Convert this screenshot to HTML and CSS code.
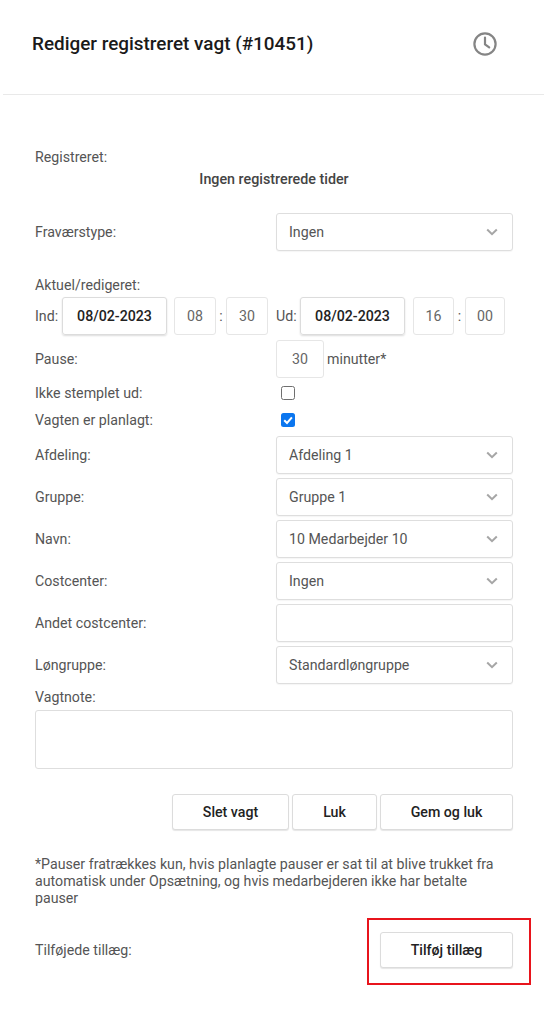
FILE: index.html
```html
<!DOCTYPE html>
<html lang="da">
<head>
<meta charset="utf-8">
<title>Rediger registreret vagt</title>
<link rel="stylesheet" href="styles.css">
</head>
<body>
<div class="modal">
  <header class="head">
    <h1>Rediger registreret vagt (#10451)</h1>
    <svg class="clock" width="26" height="26" viewBox="0 0 26 26" fill="none" stroke="#858585" stroke-width="2.2" stroke-linecap="round" stroke-linejoin="round"><circle cx="13" cy="13" r="10.6"/><path d="M13 6.6V13.4L17.2 16.4"/></svg>
  </header>
  <main class="body">
    <div class="label-line reg">Registreret:</div>
    <div class="none">Ingen registrerede tider</div>

    <div class="row fravaer"><label>Fraværstype:</label><div class="select">Ingen<svg class="chev" width="12" height="8" viewBox="0 0 12 8" fill="none"><path d="M1.2 1.5L6 6.2L10.8 1.5" stroke="#a6a6a6" stroke-width="2"/></svg></div></div>

    <div class="label-line aktuel">Aktuel/redigeret:</div>
    <div class="times">
      <span class="tl">Ind:</span>
      <div class="box date">08/02-2023</div>
      <div class="box t">08</div><span class="colon">:</span><div class="box t">30</div>
      <span class="tl ud">Ud:</span>
      <div class="box date date2">08/02-2023</div>
      <div class="box t t2">16</div><span class="colon c-wide">:</span><div class="box t t3">00</div>
    </div>

    <div class="row pause"><label>Pause:</label><div class="field-inline"><div class="box p">30</div><span class="min">minutter*</span></div></div>

    <div class="row check c1"><label>Ikke stemplet ud:</label><span class="cb"></span></div>
    <div class="row check c2"><label>Vagten er planlagt:</label><span class="cb on"><svg width="14" height="14" viewBox="0 0 14 14" fill="none"><path d="M3.2 7.2L6 10L10.9 4.3" stroke="#fff" stroke-width="2"/></svg></span></div>

    <div class="row sel first"><label>Afdeling:</label><div class="select">Afdeling 1<svg class="chev" width="12" height="8" viewBox="0 0 12 8" fill="none"><path d="M1.2 1.5L6 6.2L10.8 1.5" stroke="#a6a6a6" stroke-width="2"/></svg></div></div>
    <div class="row sel"><label>Gruppe:</label><div class="select">Gruppe 1<svg class="chev" width="12" height="8" viewBox="0 0 12 8" fill="none"><path d="M1.2 1.5L6 6.2L10.8 1.5" stroke="#a6a6a6" stroke-width="2"/></svg></div></div>
    <div class="row sel"><label>Navn:</label><div class="select">10 Medarbejder 10<svg class="chev" width="12" height="8" viewBox="0 0 12 8" fill="none"><path d="M1.2 1.5L6 6.2L10.8 1.5" stroke="#a6a6a6" stroke-width="2"/></svg></div></div>
    <div class="row sel"><label>Costcenter:</label><div class="select">Ingen<svg class="chev" width="12" height="8" viewBox="0 0 12 8" fill="none"><path d="M1.2 1.5L6 6.2L10.8 1.5" stroke="#a6a6a6" stroke-width="2"/></svg></div></div>
    <div class="row sel"><label>Andet costcenter:</label><div class="select"></div></div>
    <div class="row sel"><label>Løngruppe:</label><div class="select">Standardløngruppe<svg class="chev" width="12" height="8" viewBox="0 0 12 8" fill="none"><path d="M1.2 1.5L6 6.2L10.8 1.5" stroke="#a6a6a6" stroke-width="2"/></svg></div></div>

    <div class="label-line vagtnote">Vagtnote:</div>
    <div class="textarea"></div>

    <div class="actions">
      <button class="btn slet">Slet vagt</button>
      <button class="btn luk">Luk</button>
      <button class="btn gem">Gem og luk</button>
    </div>

    <p class="note">*Pauser fratrækkes kun, hvis planlagte pauser er sat til at blive trukket fra automatisk under Opsætning, og hvis medarbejderen ikke har betalte pauser</p>

    <div class="row extra"><label>Tilføjede tillæg:</label><button class="btn gem">Tilføj tillæg</button></div>
  </main>
  <div class="annot"></div>
</div>
</body>
</html>
```
FILE: styles.css
```css
* { box-sizing: border-box; }
html, body { margin: 0; padding: 0; background: #fff; }
body { font-family: Roboto, "Liberation Sans", sans-serif; font-size: 14.2px; color: #555; }
.modal { position: relative; width: 544px; height: 1012px; overflow: hidden; }
.head { height: 95px; margin-left: 3px; padding: 0 46px 6px 29px; border-bottom: 1px solid #e9e9e9; display: flex; align-items: center; justify-content: space-between; }
.head h1 { margin: 0; font-size: 18.9px; font-weight: 500; color: #1a1a1a; line-height: 24px; }
.clock { display: block; }
.body { padding: 0 31px 0 35px; }
.label-line { line-height: 17px; height: 17px; }
.reg { margin-top: 54px; }
.none { margin-top: 5px; text-align: center; font-weight: 500; color: #444; line-height: 17px; height: 17px; font-size: 14.3px; }
.row { display: flex; align-items: center; }
.row label { width: 241px; flex: none; }
.select { position: relative; flex: 1; height: 38px; padding: 0 12px; line-height: 36px; border: 1px solid #dedede; border-radius: 3px; background: #fff; box-shadow: 0 1px 1px rgba(0,0,0,.04); color: #555; }
.chev { position: absolute; right: 14px; top: 14px; }
.fravaer { margin-top: 25px; }
.aktuel { margin-top: 26px; }
.times { display: flex; align-items: center; height: 38px; margin-top: 3px; }
.tl { flex: none; width: 27px; }
.tl.ud { width: 24px; margin-left: 8px; }
.box { height: 38px; line-height: 36px; text-align: center; border: 1px solid #e6e6e6; border-radius: 3px; flex: none; }
.date { width: 105px; margin-right: 7px; color: #222; font-weight: 500; border-color: #dcdcdc; box-shadow: 0 1px 2px rgba(0,0,0,.14); font-size: 14.2px; }
.date2 { margin-right: 8px; }
.t { width: 42px; color: #666; }
.t2 { width: 41px; }
.t3 { width: 40px; }
.colon { width: 10px; text-align: center; flex: none; }
.c-wide { width: 11px; }
.pause { margin-top: 5px; }
.field-inline { display: flex; align-items: center; }
.box.p { width: 48px; color: #666; }
.min { margin-left: 3px; }
.check { height: 17px; }
.c1 { margin-top: 6px; }
.c2 { margin-top: 10px; }
.cb { width: 14px; height: 14px; margin-left: 5px; border: 1px solid #6f6f6f; border-radius: 2.5px; background: #fff; display: block; flex: none; position: relative; }
.cb.on { border: 0; background: #0b76ef; }
.cb svg { display: block; }
.sel { margin-top: 4.1px; }
.sel.first { margin-top: 8px; }
.vagtnote { margin-top: 4.5px; }
.textarea { height: 59px; margin-top: 4px; border: 1px solid #dedede; border-radius: 3px; }
.actions { display: flex; justify-content: flex-end; gap: 3px; margin-top: 25px; }
.btn { height: 36px; padding: 0; font: 500 14.2px Roboto, "Liberation Sans", sans-serif; color: #222; background: #fff; border: 1px solid #dcdcdc; border-radius: 3px; box-shadow: 0 1px 1px rgba(0,0,0,.1); text-align: center; }
.slet { width: 117px; }
.luk { width: 85px; }
.gem { width: 133px; }
.note { margin: 26px 0 0; line-height: 17px; width: 470px; }
.extra { justify-content: space-between; margin-top: 25px; }
.extra label { width: auto; }
.annot { position: absolute; left: 367px; top: 918px; width: 164px; height: 67px; border: 2px solid #e8141c; pointer-events: none; }
```
